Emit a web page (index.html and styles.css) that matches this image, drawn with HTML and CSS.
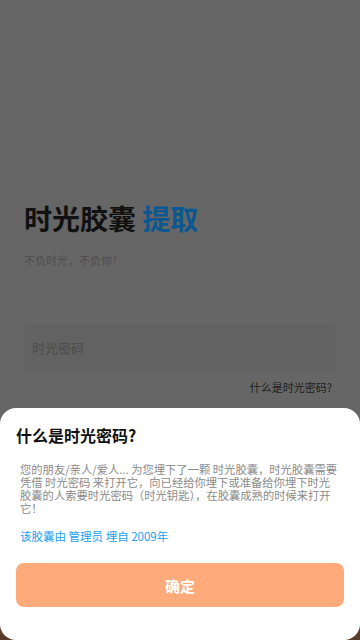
FILE: index.html
```html
<!DOCTYPE html>
<html lang="zh-CN">
<head>
  <meta charset="UTF-8">
  <meta name="viewport" content="width=device-width, initial-scale=1.0">
  <title>时光胶囊 提取</title>
  <link rel="stylesheet" href="styles.css">
</head>
<body>

  <div class="page">
    <h1 class="title">时光胶囊 <span class="accent">提取</span></h1>
    <p class="slogan">不负时光，不负你！</p>

    <div class="field">
      <input type="text" placeholder="时光密码">
    </div>
    <div class="help">什么是时光密码?</div>
  </div>

  <!-- 弹出层 -->
  <div class="sheet">
    <h2>什么是时光密码?</h2>
    <p class="desc">您的朋友/亲人/爱人... 为您埋下了一颗 时光胶囊，时光胶囊需要<br>凭借 时光密码 来打开它，向已经给你埋下或准备给你埋下时光<br>胶囊的人索要时光密码（时光钥匙），在胶囊成熟的时候来打开<br>它！</p>
    <p class="owner">该胶囊由 管理员 埋自 2009年</p>
    <button>确定</button>
  </div>

</body>
</html>
```

FILE: styles.css
```css
html, body {
  height: 100%;
}
body {
  margin: 0;
  font-family: "Noto Sans CJK SC", "Noto Sans", sans-serif;
  background-color: #666;
  display: flex;
  flex-direction: column;
  overflow: hidden;
  position: relative;
}
body::after {
  content: "";
  position: absolute;
  left: 0;
  right: 0;
  bottom: 0;
  height: 20px;
  background-color: #5b3b2b;
}
.page {
  flex: 1;
  padding: 198px 24px 0 24px;
}
.title {
  margin: 0;
  font-size: 28px;
  line-height: 40px;
  font-weight: bold;
  color: #111;
}
.accent {
  color: #0b5792;
}
.slogan {
  margin: 13px 0 0 0;
  font-size: 11px;
  line-height: 18px;
  color: #4e4e4e;
}
.field {
  margin-top: 55px;
  background-color: #626262;
  border-radius: 7px;
  height: 47px;
  display: flex;
  align-items: center;
  padding: 0 8px;
}
.field input {
  border: none;
  background: transparent;
  outline: none;
  width: 100%;
  padding: 0;
  font-family: inherit;
  font-size: 13px;
  font-weight: 500;
  color: #333;
}
.field input::placeholder {
  color: #4f4f4f;
}
.help {
  text-align: right;
  margin-top: 8px;
  padding-right: 4px;
  font-size: 11px;
  line-height: 16px;
  color: #1e1e1e;
}
.sheet {
  position: relative;
  z-index: 1;
  background-color: #fff;
  border-radius: 16px;
  padding: 16px 16px 33px 16px;
}
.sheet h2 {
  margin: 0;
  font-size: 16px;
  line-height: 22px;
  font-weight: bold;
  color: #111;
}
.desc {
  margin: 17px 0 0 4px;
  font-size: 11.3px;
  line-height: 13px;
  color: #8a8a8a;
  white-space: nowrap;
}
.owner {
  margin: 15px 4px 0 4px;
  font-size: 11.5px;
  line-height: 13px;
  color: #1aa0f0;
}
.sheet button {
  display: block;
  width: 100%;
  height: 44px;
  margin-top: 20px;
  border: none;
  border-radius: 8px;
  background-color: #ffaa7a;
  color: #fff;
  font-family: inherit;
  font-size: 15px;
  font-weight: bold;
}
```
